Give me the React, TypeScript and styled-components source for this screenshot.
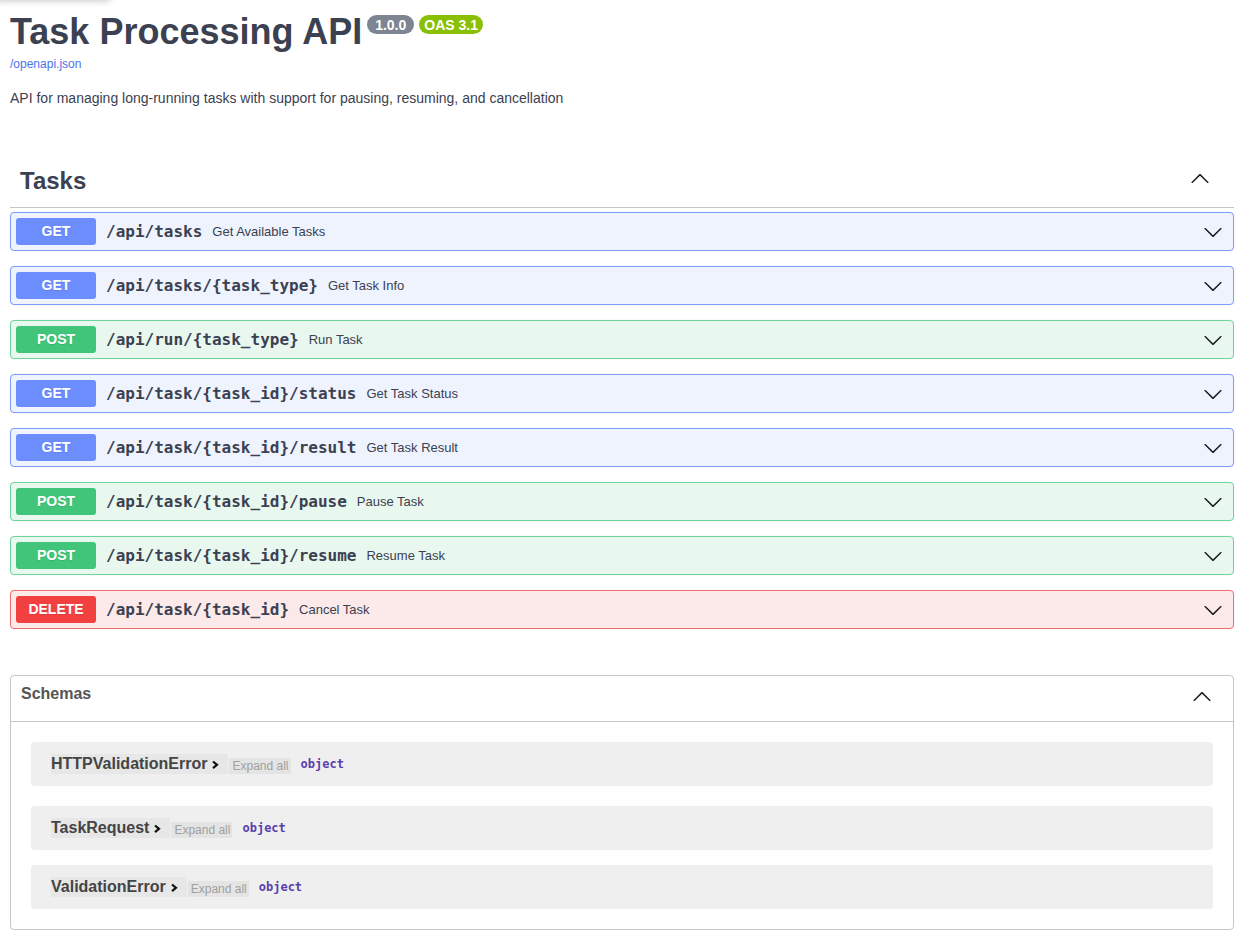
import React from "react";
import styled, { createGlobalStyle } from "styled-components";

const GlobalStyle = createGlobalStyle`
  html, body { margin: 0; padding: 0; background: #fff; }
  body { font-family: "Liberation Sans", Arial, sans-serif; color: #3b4151; }
  * { box-sizing: border-box; }
`;

type Method = "GET" | "POST" | "DELETE";

const palette: Record<Method, { badge: string; bg: string; border: string }> = {
  GET: { badge: "#6b8dfd", bg: "#eef3fe", border: "#7d9cfc" },
  POST: { badge: "#41c57b", bg: "#e9f8ef", border: "#6dd49c" },
  DELETE: { badge: "#f1403f", bg: "#fce9e9", border: "#ef6f6f" },
};

const Page = styled.div`
  position: relative;
  padding: 0 13px 40px 10px;
`;

const TopShade = styled.div`
  position: absolute;
  top: -30px;
  left: -8px;
  width: 120px;
  height: 30px;
  background: #fff;
  border-radius: 6px;
  box-shadow: 0 1px 7px rgba(0, 0, 0, 0.22);
`;

const Title = styled.h2`
  margin: 0;
  padding-top: 11px;
  display: flex;
  align-items: flex-start;
  font-size: 36px;
  font-weight: 700;
  line-height: normal;
  color: #3b4151;
`;

const BadgeGroup = styled.span`
  display: flex;
  gap: 5px;
  margin-left: 5px;
  margin-top: 4px;
`;

const Badge = styled.span<{ $bg: string; $pad: number }>`
  display: inline-flex;
  align-items: center;
  height: 19px;
  padding: 0 ${(p) => p.$pad}px;
  border-radius: 57px;
  background: ${(p) => p.$bg};
  color: #fff;
  font-size: 14px;
  font-weight: 700;
`;

const SpecLink = styled.a`
  display: block;
  margin-top: 4px;
  font-size: 12px;
  line-height: normal;
  color: #4a72e6;
  text-decoration: none;
`;

const Description = styled.p`
  margin: 19px 0 0;
  font-size: 14px;
  line-height: normal;
  color: #3b4151;
`;

const TagSection = styled.section`
  margin-top: 46px;
`;

const TagHeader = styled.div`
  display: flex;
  align-items: center;
  height: 56px;
  padding: 3px 24px 0 10px;
  border-bottom: 1px solid rgba(59, 65, 81, 0.3);
`;

const TagTitle = styled.h3`
  flex: 1;
  margin: 0;
  font-size: 24px;
  font-weight: 700;
  line-height: normal;
  color: #3b4151;
`;

const OpList = styled.div`
  display: flex;
  flex-direction: column;
  gap: 15px;
  padding-top: 4px;
`;

const OpBlock = styled.div<{ $method: Method }>`
  border: 1px solid ${(p) => palette[p.$method].border};
  border-radius: 4px;
  background: ${(p) => palette[p.$method].bg};
  box-shadow: 0 0 2px rgba(0, 0, 0, 0.08);
`;

const OpSummary = styled.div`
  display: flex;
  align-items: center;
  padding: 5px;
`;

const MethodBadge = styled.span<{ $method: Method }>`
  min-width: 80px;
  padding: 6px 0;
  border-radius: 3px;
  background: ${(p) => palette[p.$method].badge};
  color: #fff;
  font-size: 14px;
  line-height: 15px;
  font-weight: 700;
  text-align: center;
  text-shadow: 0 1px 0 rgba(0, 0, 0, 0.1);
`;

const OpPath = styled.span`
  padding: 0 10px;
  font-family: "DejaVu Sans Mono", "Liberation Mono", monospace;
  font-size: 16px;
  font-weight: 700;
  color: #3b4151;
`;

const OpDesc = styled.span`
  flex: 1;
  font-size: 13px;
  color: #3b4151;
`;

const ChevronSvg = styled.svg<{ $up?: boolean; $mr?: number; $mt?: number }>`
  flex: none;
  width: 20px;
  height: 20px;
  margin-right: ${(p) => p.$mr ?? 0}px;
  margin-top: ${(p) => p.$mt ?? 0}px;
  transform: ${(p) => (p.$up ? "rotate(180deg)" : "none")};
  fill: #1b1b1b;
`;

const SchemasBox = styled.section`
  margin-top: 46px;
  border: 1px solid rgba(59, 65, 81, 0.3);
  border-radius: 4px;
  padding-bottom: 5px;
`;

const SchemasHeader = styled.div`
  display: flex;
  align-items: flex-start;
  height: 46px;
  padding: 9px 21px 0 10px;
  border-bottom: 1px solid rgba(59, 65, 81, 0.3);
`;

const SchemasTitle = styled.h4`
  flex: 1;
  margin: 0;
  font-size: 16px;
  font-weight: 700;
  line-height: normal;
  color: #555;
`;

const ModelList = styled.div`
  display: flex;
  flex-direction: column;
  padding: 20px 20px 0;
`;

const ModelContainer = styled.div`
  display: flex;
  align-items: center;
  height: 44px;
  padding: 0 20px;
  margin-bottom: 15px;
  border-radius: 4px;
  background: #efefef;
  &:first-child {
    margin-bottom: 20px;
  }
`;

const ModelToggle = styled.span`
  display: inline-flex;
  align-items: center;
  height: 20px;
  background: rgba(40, 40, 80, 0.04);
  font-size: 16px;
  font-weight: 700;
  color: #444;
`;

const ToggleArrow = styled.svg`
  width: 21px;
  height: 20px;
  stroke: #111;
  stroke-width: 2.2;
  fill: none;
`;

const ExpandAll = styled.span`
  display: inline-flex;
  align-items: center;
  height: 16px;
  margin-top: 3px;
  padding: 0 2px 0 3px;
  margin-left: 1px;
  background: #e4e4e4;
  font-size: 12px;
  color: #a0a0a0;
`;

const PropType = styled.span`
  margin-left: 10px;
  font-family: "DejaVu Sans Mono", "Liberation Mono", monospace;
  font-size: 12px;
  font-weight: 700;
  color: #5a3fae;
`;

const arrowPath =
  "M17.418 6.109c.272-.268.709-.268.979 0s.271.701 0 .969l-7.908 7.83c-.27.268-.707.268-.979 0l-7.908-7.83c-.27-.268-.27-.701 0-.969.271-.268.709-.268.979 0L10 13.25l7.418-7.141z";

const Chevron: React.FC<{ up?: boolean; mr?: number; mt?: number }> = ({ up, mr, mt }) => (
  <ChevronSvg $up={up} $mr={mr} $mt={mt} viewBox="0 0 20 20" aria-hidden="true">
    <path d={arrowPath} />
  </ChevronSvg>
);

const ops: { method: Method; path: string; summary: string }[] = [
  { method: "GET", path: "/api/tasks", summary: "Get Available Tasks" },
  { method: "GET", path: "/api/tasks/{task_type}", summary: "Get Task Info" },
  { method: "POST", path: "/api/run/{task_type}", summary: "Run Task" },
  { method: "GET", path: "/api/task/{task_id}/status", summary: "Get Task Status" },
  { method: "GET", path: "/api/task/{task_id}/result", summary: "Get Task Result" },
  { method: "POST", path: "/api/task/{task_id}/pause", summary: "Pause Task" },
  { method: "POST", path: "/api/task/{task_id}/resume", summary: "Resume Task" },
  { method: "DELETE", path: "/api/task/{task_id}", summary: "Cancel Task" },
];

const models = ["HTTPValidationError", "TaskRequest", "ValidationError"];

export default function App() {
  return (
    <>
      <GlobalStyle />
      <Page>
        <TopShade />
        <Title>
          Task Processing API
          <BadgeGroup>
            <Badge $bg="#7d8492" $pad={8}>1.0.0</Badge>
            <Badge $bg="#89bf04" $pad={5}>OAS 3.1</Badge>
          </BadgeGroup>
        </Title>
        <SpecLink href="#">/openapi.json</SpecLink>
        <Description>
          API for managing long-running tasks with support for pausing, resuming, and cancellation
        </Description>

        <TagSection>
          <TagHeader>
            <TagTitle>Tasks</TagTitle>
            <Chevron up mt={-5} />
          </TagHeader>
          <OpList>
            {ops.map((op) => (
              <OpBlock key={op.method + op.path} $method={op.method}>
                <OpSummary>
                  <MethodBadge $method={op.method}>{op.method}</MethodBadge>
                  <OpPath>{op.path}</OpPath>
                  <OpDesc>{op.summary}</OpDesc>
                  <Chevron mr={5} />
                </OpSummary>
              </OpBlock>
            ))}
          </OpList>
        </TagSection>

        <SchemasBox>
          <SchemasHeader>
            <SchemasTitle>Schemas</SchemasTitle>
            <Chevron up mt={2} />
          </SchemasHeader>
          <ModelList>
            {models.map((m) => (
              <ModelContainer key={m}>
                <ModelToggle>
                  {m}
                  <ToggleArrow viewBox="0 0 21 20" aria-hidden="true">
                    <polyline points="6,7.5 10,10.8 6,14.2" />
                  </ToggleArrow>
                </ModelToggle>
                <ExpandAll>Expand all</ExpandAll>
                <PropType>object</PropType>
              </ModelContainer>
            ))}
          </ModelList>
        </SchemasBox>
      </Page>
    </>
  );
}
